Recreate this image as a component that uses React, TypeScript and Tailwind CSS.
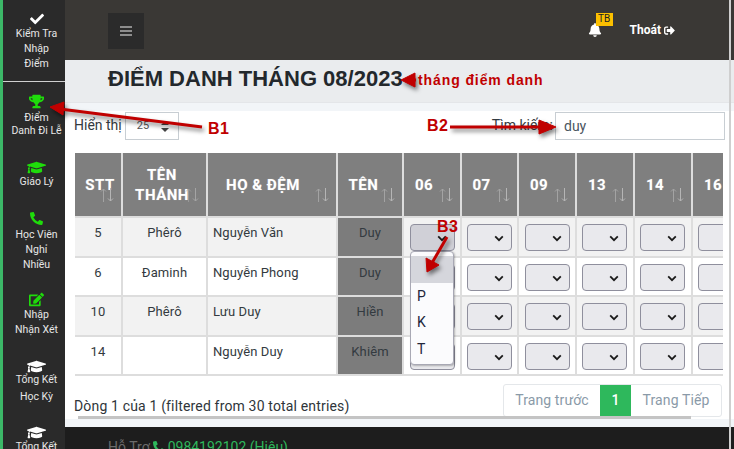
import React from "react";
import { FaCheck, FaTrophy, FaGraduationCap, FaPhoneAlt, FaEdit, FaBell, FaSignOutAlt } from "react-icons/fa";

const RB = "font-['Roboto',sans-serif]";
const AR = "font-['Liberation_Sans',Arial,sans-serif]";

function SideItem({ icon, lines, cls, leading, boxCls }: { icon: React.ReactNode; lines: string[]; cls: string; leading: string; boxCls: string }) {
  return (
    <div className={`flex flex-col items-center pl-[5px] text-[10.5px] text-[#e6e6e6] ${leading} ${cls}`}>
      <div className={`flex items-center justify-center ${boxCls}`}>{icon}</div>
      {lines.map((l) => (
        <div key={l} className="whitespace-nowrap">{l}</div>
      ))}
    </div>
  );
}

function Sort({ cls }: { cls?: string }) {
  return (
    <svg className={`absolute bottom-[14px] right-[7px] ${cls ?? ""}`} width="14" height="14" viewBox="0 0 14 14" fill="none" strokeWidth="1">
      <path d="M3.5 14V1M1 3.5 3.5 1 6 3.5" stroke="#a3a3a3" />
      <path d="M10.5 0v13M8 10.5l2.5 2.5 2.5-2.5" stroke="#b5b5b5" />
    </svg>
  );
}

function Chevron() {
  return (
    <svg className="absolute right-[7px] top-[10px]" width="10" height="7" viewBox="0 0 10 7" fill="none">
      <path d="M1.2 1.4 5 5.2l3.8-3.8" stroke="#1a1a1a" strokeWidth="1.8" />
    </svg>
  );
}

function Sel({ hover, ml }: { hover?: boolean; ml: string }) {
  return (
    <div className={`relative mt-[6px] h-[27px] w-[45px] rounded-[4px] border border-[#8f8f9d] ${ml} ${hover ? "bg-[#d0d0d7]" : "bg-[#e9e9ed]"}`}>
      <Chevron />
    </div>
  );
}

const th = "relative border-r-2 border-b-2 border-[#dddddd] bg-[#7f7f7f] text-center align-middle text-[15px] font-bold leading-[20px] text-white tracking-[0.5px] [text-shadow:0_0_1px_rgba(255,255,255,0.4)]";
const td = "border-r-2 border-b-2 border-[#dddddd] align-top pt-[5px] text-[13px] tracking-[0.1px] leading-5 text-[#333a40]";

const selMargins = ["ml-[6px]", "ml-[5px]", "ml-[6px]", "ml-[5px]", "ml-[5px]", "ml-[5px]"];

const rows = [
  { stt: "5", thanh: "Phêrô", ho: "Nguyễn Văn", ten: "Duy", bg: "bg-[#f2f2f2]", h: "h-[40px]" },
  { stt: "6", thanh: "Đaminh", ho: "Nguyễn Phong", ten: "Duy", bg: "bg-white", h: "h-[39px]" },
  { stt: "10", thanh: "Phêrô", ho: "Lưu Duy", ten: "Hiền", bg: "bg-[#f2f2f2]", h: "h-[40px]" },
  { stt: "14", thanh: "", ho: "Nguyễn Duy", ten: "Khiêm", bg: "bg-white", h: "h-[39px]" },
];

export default function App() {
  return (
    <div className={`relative flex h-[449px] w-[734px] overflow-hidden bg-white ${RB}`}>
      {/* Sidebar */}
      <aside className="h-full w-[65px] shrink-0 overflow-hidden border-l-[3px] border-[#3cb868] bg-[#2a2a2a]">
        <div className="h-[82px] border-b border-[#d0d0d0]">
          <SideItem icon={<FaCheck className="text-[14px] text-white" />} lines={["Kiểm Tra", "Nhập", "Điểm"]} cls="pt-[11px]" leading="leading-[15px]" boxCls="h-[15px]" />
        </div>
        <SideItem icon={<FaTrophy className="text-[15px] text-[#1fdc0b]" />} lines={["Điểm", "Danh Đi Lễ"]} cls="pt-[10px]" leading="leading-[13px]" boxCls="h-[19px]" />
        <SideItem icon={<FaGraduationCap className="text-[19px] text-[#1fdc0b]" />} lines={["Giáo Lý"]} cls="pt-[23px]" leading="leading-[15px]" boxCls="h-[14px]" />
        <SideItem icon={<FaPhoneAlt className="text-[13px] text-[#1fdc0b]" />} lines={["Học Viên", "Nghỉ", "Nhiều"]} cls="pt-[21px]" leading="leading-[15px]" boxCls="h-[17px]" />
        <SideItem icon={<FaEdit className="text-[15px] text-[#1fdc0b]" />} lines={["Nhập", "Nhận Xét"]} cls="pt-[19px]" leading="leading-[15px]" boxCls="h-[16px]" />
        <SideItem icon={<FaGraduationCap className="text-[19px] text-white" />} lines={["Tổng Kết", "Học Kỳ"]} cls="pt-[25px]" leading="leading-[17px]" boxCls="h-[9px]" />
        <SideItem icon={<FaGraduationCap className="text-[19px] text-white" />} lines={["Tổng Kết"]} cls="pt-[21px]" leading="leading-[17px]" boxCls="h-[12px]" />
      </aside>

      {/* Main */}
      <main className="flex h-full min-w-0 flex-1 flex-col">
        <header className="flex h-[60px] shrink-0 items-center bg-[#3a3835] pl-[43px] pr-[59px]">
          <div className="mt-[2px] flex h-[36px] w-[36px] items-center justify-center bg-[#2b2b2b]">
            <svg width="12" height="10" viewBox="0 0 12 10" fill="#8d8d8d">
              <rect y="0" width="12" height="2" />
              <rect y="4" width="12" height="2" />
              <rect y="8" width="12" height="2" />
            </svg>
          </div>
          <div className="relative ml-auto mr-[28px] mt-[-1px]">
            <FaBell className="text-[14px] text-white" />
            <span className="absolute left-[8px] top-[-10px] flex h-[13px] w-[17px] items-center justify-center bg-[#fcc000] text-[10px] leading-none text-[#222]">TB</span>
          </div>
          <div className="flex items-center gap-[3px] text-[12px] font-bold text-white">
            Thoát <FaSignOutAlt className="text-[11px]" />
          </div>
        </header>

        <div className="flex h-[43px] shrink-0 items-center border-b border-[#e4e6e9] bg-[#eaecee] pb-[4px] pl-[43px]">
          <h1 className={`${AR} whitespace-nowrap text-[22px] font-bold leading-none text-[#23282c]`}>ĐIỂM DANH THÁNG 08/2023</h1>
        </div>
        <div className="h-[8px] shrink-0 bg-[#f2f5f8]" />

        <section className="flex h-[308px] shrink-0 flex-col bg-white pl-[9px]">
          <div className="flex h-[42px] shrink-0 items-start pt-[1px] text-[14px] text-[#333a40]">
            <span className="mt-[3px] whitespace-nowrap leading-5">Hiển thị</span>
            <div className="ml-[3px] flex h-[28px] w-[54px] items-center justify-between border border-[#c8ced3] pl-[11px] pr-[9px] text-[11px] text-[#555]">
              25
              <svg width="8" height="11" viewBox="0 0 8 11"><path d="M4 0 8 4H0zM4 11 0 7h8z" fill="#444" /></svg>
            </div>
            <span className="ml-auto mt-[3px] whitespace-nowrap leading-5">Tìm kiếm:</span>
            <div className="ml-[2px] mr-[9px] flex h-[28px] w-[170px] items-center border border-[#c8ced3] pl-[8px] leading-5 text-[#4a5560]">duy</div>
          </div>

          <div className="h-[223px] w-[649px] shrink-0 overflow-hidden pl-[1px]">
            <table className="w-[676px] table-fixed border-separate border-spacing-0">
              <colgroup>
                <col className="w-[48px]" />
                <col className="w-[85px]" />
                <col className="w-[130px]" />
                <col className="w-[66px]" />
                <col className="w-[58px]" />
                <col className="w-[57px]" />
                <col className="w-[58px]" />
                <col className="w-[58px]" />
                <col className="w-[58px]" />
                <col className="w-[58px]" />
              </colgroup>
              <thead>
                <tr className="h-[65px]">
                  <th className={`${th} pl-[10px] pr-[6px]`}>STT<Sort cls="right-[5px]" /></th>
                  <th className={`${th} pr-[5px]`}>TÊN<br />THÁNH<Sort cls="right-[6px] opacity-70" /></th>
                  <th className={`${th} pr-[18px]`}>HỌ &amp; ĐỆM<Sort /></th>
                  <th className={`${th} pr-[13px]`}>TÊN<Sort /></th>
                  <th className={`${th} pr-[16px]`}>06<Sort /></th>
                  <th className={`${th} pr-[16px]`}>07<Sort /></th>
                  <th className={`${th} pr-[16px]`}>09<Sort /></th>
                  <th className={`${th} pr-[16px]`}>13<Sort /></th>
                  <th className={`${th} pr-[16px]`}>14<Sort /></th>
                  <th className={`${th} pr-[16px]`}>16<Sort /></th>
                </tr>
              </thead>
              <tbody>
                {rows.map((r, i) => (
                  <tr key={r.stt} className={`${r.bg} ${r.h}`}>
                    <td className={`${td} text-center`}>{r.stt}</td>
                    <td className={`${td} text-center`}>{r.thanh}</td>
                    <td className={`${td} pl-[5px]`}>{r.ho}</td>
                    <td className={`${td} bg-[#7c7c7c] text-center`}>{r.ten}</td>
                    {selMargins.map((ml, c) => (
                      <td key={c} className="border-r-2 border-b-2 border-[#dddddd] align-top">
                        <Sel ml={ml} hover={i === 0 && c === 0} />
                      </td>
                    ))}
                  </tr>
                ))}
              </tbody>
            </table>
          </div>

          <div className="flex min-h-0 flex-1 items-start pr-[12px] pt-[8px]">
            <span className="mt-[12px] whitespace-nowrap text-[14px] leading-5 tracking-[0.16px] text-[#2f353a]">Dòng 1 của 1 (filtered from 30 total entries)</span>
            <div className="ml-auto flex h-[33px] items-stretch rounded-[3px] border border-[#e4e7ea] text-[14px] tracking-[0.1px] text-[#8a9aa8]">
              <span className="flex w-[96px] items-center justify-center">Trang trước</span>
              <span className="flex w-[31px] items-center justify-center bg-[#2eb85c] font-medium text-white">1</span>
              <span className="flex w-[90px] items-center justify-center">Trang Tiếp</span>
            </div>
          </div>
        </section>

        <div className="h-[8px] shrink-0 bg-[#f2f5f8]">
          <div className="relative ml-[13px] -mt-[3px] h-[3px] w-[613px] bg-[#c4c4c4]" />
        </div>

        <footer className="flex h-[22px] shrink-0 items-start gap-[3px] bg-[#1d1d1d] pl-[43px] pt-[10px] text-[14px] leading-5 text-[#6b6b6b]">
          Hỗ Trợ <FaPhoneAlt className="mt-[4px] text-[12px] text-[#2eb85c]" /> <span className="text-[#2eb85c]">0984192102 (Hiệu)</span>
        </footer>
      </main>

      {/* Open native dropdown */}
      <div className="absolute left-[410px] top-[251px] h-[114px] w-[44px] rounded-[4px] border border-[#a8a8b4] bg-[#fbfbfd] pt-[4px] text-[14px] text-[#22263a] shadow-[1px_1px_2px_rgba(0,0,0,0.25)]">
        <div className="h-[27px] bg-[#d5d6dc]" />
        <div className="flex h-[26.5px] items-center pl-[6px]">P</div>
        <div className="flex h-[26.5px] items-center pl-[6px]">K</div>
        <div className="flex h-[26.5px] items-center pl-[6px]">T</div>
      </div>

      {/* Window edge */}
      <div className="absolute right-[3px] top-0 h-full w-[2px] bg-[#cfcfcf]" />

      {/* Annotations */}
      <svg className="pointer-events-none absolute left-0 top-0 [filter:drop-shadow(2px_3px_2px_rgba(0,0,0,0.5))]" width="734" height="449" viewBox="0 0 734 449">
        <g fill="#c00000" stroke="#c00000">
          <path d="M202 127 60 109" strokeWidth="3" />
          <path d="M50 107 64 102 63 115Z" />
          <path d="M450 127H542" strokeWidth="3" />
          <path d="M556 127 539 120V134Z" />
          <path d="M401 80 415 73V87Z" />
          <path d="M412 80H416" strokeWidth="3" />
          <path d="M447 237 432 263" strokeWidth="3" />
          <path d="M427 272 426 258 439 265Z" />
        </g>
      </svg>
      <span className={`${AR} absolute left-[208px] top-[120px] text-[16px] font-bold leading-[18px] tracking-[0.5px] text-[#c00000]`}>B1</span>
      <span className={`${AR} absolute left-[427px] top-[117px] text-[16px] font-bold leading-[18px] tracking-[0.5px] text-[#c00000]`}>B2</span>
      <span className={`${AR} absolute left-[437px] top-[218px] text-[16px] font-bold leading-[18px] tracking-[0.5px] text-[#c00000]`}>B3</span>
      <span className={`${AR} absolute left-[418px] top-[72px] whitespace-nowrap text-[14px] font-bold leading-4 tracking-[0.9px] text-[#c00000]`}>tháng điểm danh</span>
    </div>
  );
}
